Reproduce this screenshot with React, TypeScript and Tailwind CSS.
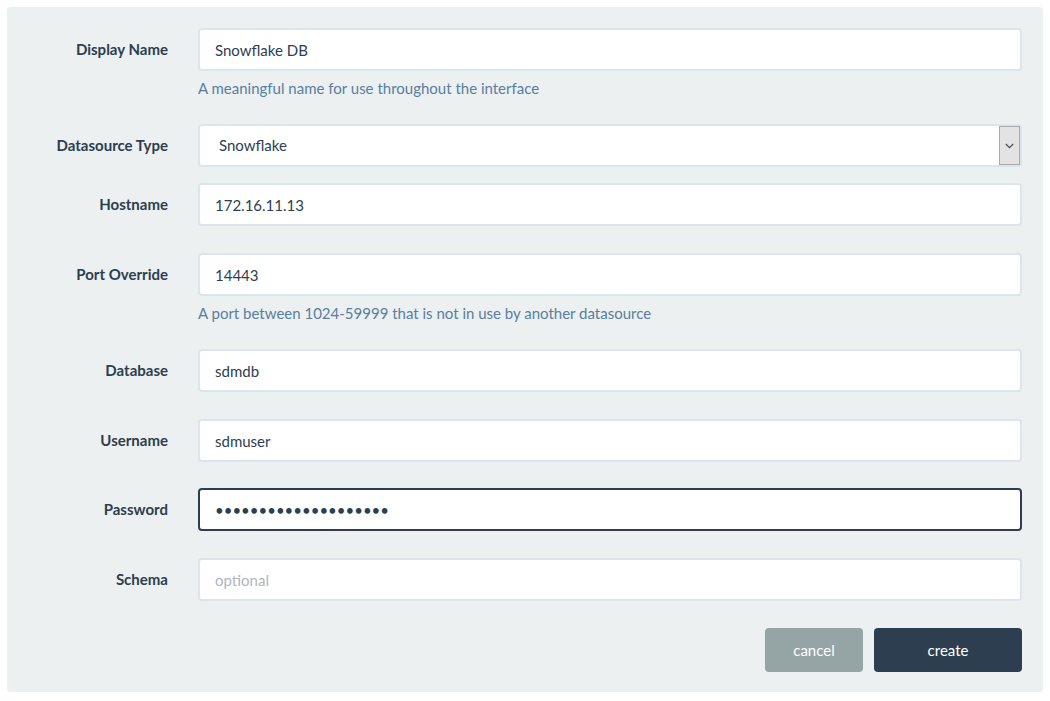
import React from "react";

const inputCls =
  "w-full h-[43px] rounded-[4px] border-2 border-[#dce4ec] bg-white px-[15px] text-[15px] text-[#2c3e50] placeholder:text-[#acb6c0] outline-none";

function Label({ children }: { children: React.ReactNode }) {
  return (
    <div className="flex h-[43px] w-[161px] shrink-0 items-center justify-end text-[15px] font-bold text-[#2c3e50]">
      {children}
    </div>
  );
}

function Row({
  label,
  help,
  mb,
  children,
}: {
  label: string;
  help?: string;
  mb: string;
  children: React.ReactNode;
}) {
  return (
    <div className={`flex gap-[30px] ${mb}`}>
      <Label>{label}</Label>
      <div className="flex-1">
        {children}
        {help && (
          <p className="mt-[7px] text-[15px] leading-[21px] text-[#597ea2]">{help}</p>
        )}
      </div>
    </div>
  );
}

export default function App() {
  return (
    <div
      className="min-h-[701px] bg-white px-[7px] pt-[7px] pb-[10px]"
      style={{ fontFamily: "Lato, 'Open Sans', sans-serif" }}
    >
      <div className="rounded-[4px] bg-[#ecf0f1] pt-[21px] pb-[20px] pr-[21px]">
        <Row label="Display Name" help="A meaningful name for use throughout the interface" mb="mb-[25px]">
          <input className={inputCls} defaultValue="Snowflake DB" />
        </Row>
        <Row label="Datasource Type" mb="mb-[16px]">
          <div className="relative flex h-[43px] w-full items-center rounded-[4px] border-2 border-[#dce4ec] bg-white pl-[19px] text-[15px] text-[#2c3e50]">
            Snowflake
            <div className="absolute right-0 top-0 flex h-[39px] w-[21px] items-center justify-center border border-[#a9a9a9] bg-[#e3e3e3]">
              <svg width="9" height="6" viewBox="0 0 9 6" fill="none">
                <path d="M0.8 1l3.7 3.7L8.2 1" stroke="#4a4a4a" strokeWidth="1.1" />
              </svg>
            </div>
          </div>
        </Row>
        <Row label="Hostname" mb="mb-[27px]">
          <input className={inputCls} defaultValue="172.16.11.13" />
        </Row>
        <Row
          label="Port Override"
          help="A port between 1024-59999 that is not in use by another datasource"
          mb="mb-[25px]"
        >
          <input className={inputCls} defaultValue="14443" />
        </Row>
        <Row label="Database" mb="mb-[27px]">
          <input className={inputCls} defaultValue="sdmdb" />
        </Row>
        <Row label="Username" mb="mb-[26px]">
          <input className={inputCls} defaultValue="sdmuser" />
        </Row>
        <Row label="Password" mb="mb-[27px]">
          <input
            type="password"
            className="w-full h-[43px] rounded-[4px] border-2 border-[#2c3e50] bg-white px-[15px] text-[15px] text-[#2c3e50] outline-none"
            defaultValue="xxxxxxxxxxxxxxxxxxxx"
          />
        </Row>
        <Row label="Schema" mb="mb-[27px]">
          <input className={inputCls} placeholder="optional" />
        </Row>
        <div className="flex justify-end gap-[11px]">
          <button className="h-[44px] w-[98px] rounded-[4px] bg-[#95a5a6] text-[15px] text-white">
            cancel
          </button>
          <button className="h-[44px] w-[148px] rounded-[4px] bg-[#2c3e50] text-[15px] text-white">
            create
          </button>
        </div>
      </div>
    </div>
  );
}
